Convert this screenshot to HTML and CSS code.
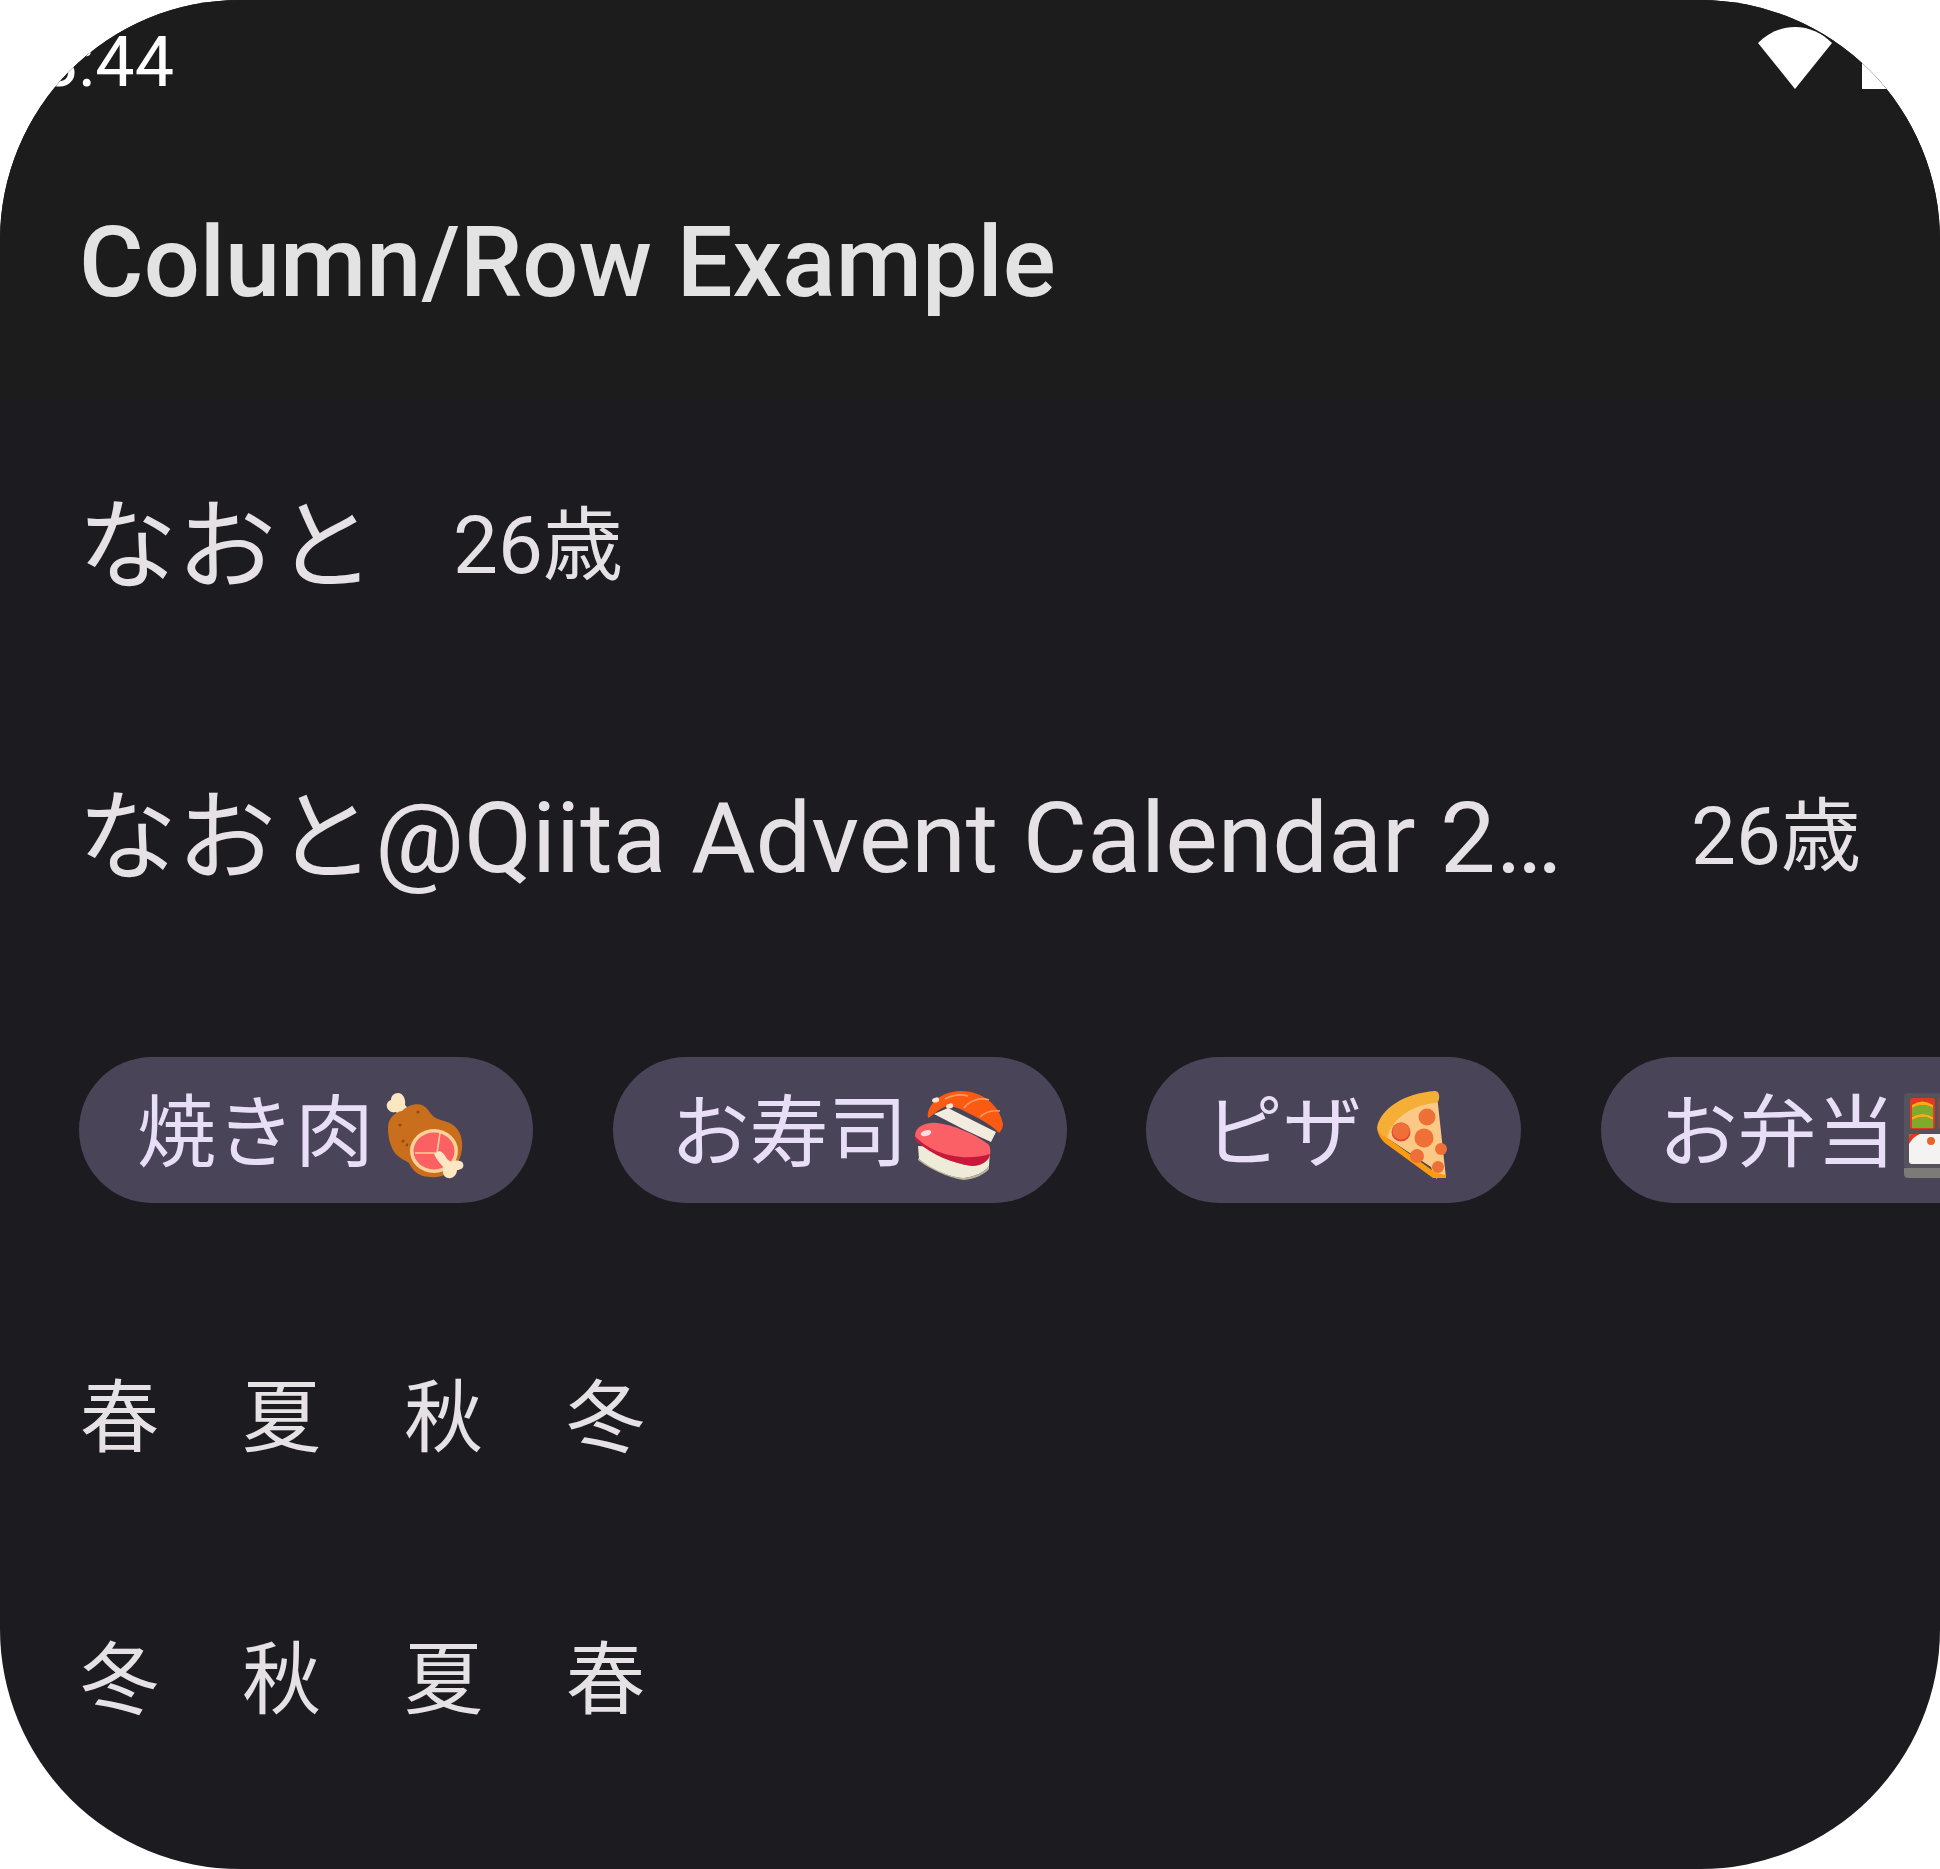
FILE: index.html
```html
<!DOCTYPE html>
<html lang="ja">
<head>
<meta charset="utf-8">
<title>Column/Row Example</title>
<link rel="stylesheet" href="styles.css">
</head>
<body>
<div class="frame">
  <header class="appbar">
    <div class="status">
      <span class="clock">8:44</span>
      <div class="status-icons">
        <svg class="wifi" viewBox="0 0 74 62"><path d="M0 16C10 6 23 0 37 0S64 6 74 16L37 62Z" fill="#fff"/></svg>
        <span class="battery"></span>
      </div>
    </div>
    <h1 class="title">Column/Row Example</h1>
  </header>
  <main class="content">
    <div class="row row-one">
      <span class="name">なおと</span>
      <span class="age age-near">26歳</span>
    </div>
    <div class="row row-two">
      <span class="name">なおと@Qiita Advent Calendar 2…</span>
      <span class="age age-far">26歳</span>
    </div>
    <div class="chips">
      <div class="chip">
        <span>焼き肉</span>
        <svg class="emoji" viewBox="0 0 101 100">
          <path d="M31 21l7 7-8 8-8-8c-4 1-8-1-9-5-1-3 1-6 4-7 0-4 3-7 7-7 5 0 8 6 7 12z" fill="#fbe7c2"/>
          <path d="M14 44c0-10 7-16 14-17 5-5 13-8 20-6 5 2 7 7 11 11 3 3 9 4 14 6 9 3 14 10 15 20 1 11-3 22-12 30-8 6-19 6-27 4-7-2-11-7-14-13-5-3-13-7-16-13-3-6-5-13-5-22z" fill="#c96e1c"/>
          <circle cx="26" cy="41" r="1.6" fill="#8f4d17"/><circle cx="44" cy="28" r="1.6" fill="#8f4d17"/><circle cx="29" cy="57" r="1.6" fill="#8f4d17"/><circle cx="33" cy="61" r="1.4" fill="#8f4d17"/>
          <ellipse cx="60" cy="67" rx="24" ry="22" fill="#fbd19b"/>
          <ellipse cx="60" cy="67" rx="20.5" ry="18.5" fill="#fb6162"/>
          <path d="M41 69h21M66 49l-3 20" stroke="#fbd19b" stroke-width="1.6" fill="none"/>
          <path d="M60 70l5-3c4 1 6 4 8 8l4 3c3-2 8-2 11 0 2 2 2 6-1 7-2 1-3 1-4 1 0 3-2 7-6 8-4 1-8-2-8-6 0-2 0-3 1-4-3-4-8-9-10-14z" fill="#fbe7c2"/>
        </svg>
      </div>
      <div class="chip">
        <span>お寿司</span>
        <svg class="emoji" viewBox="0 0 101 100">
          <path d="M26 30l14-6 48 24-5 10-28-13z" fill="#f1ecdd"/>
          <path d="M20 34c-2-12 12-27 33-27 22 0 39 15 42 33 0 4-2 7-4 9-6-7-17-13-31-20-9-5-15-7-20-7-8 1-14 9-20 12z" fill="#fb5a12"/>
          <path d="M37 15c8-4 16-5 23-3M56 24c5-7 16-11 25-8M72 33c5-5 12-7 20-6" stroke="#fb9a62" stroke-width="1.7" fill="none"/>
          <path d="M27 14c3-2 5 1 4 3-2 2-6 2-7 0 0-2 1-3 3-3zM41 20c3-2 5 1 4 3-2 2-6 2-7 0 0-2 1-3 3-3z" fill="#fde3d0"/>
          <path d="M10 62l1 13c10 9 30 19 45 19 10-1 21-6 25-12l1-16z" fill="#efebd9"/>
          <path d="M10 74c10 9 30 19 46 20 10-1 21-6 25-12v3c-5 6-15 10-25 11-16-2-36-12-46-20z" fill="#b9b69c"/>
          <path d="M7 52c0-9 10-14 22-13 16 2 36 10 51 21 3 3 3 9 1 14-5 6-11 8-17 8-20-3-40-11-54-24-2-2-3-4-3-6z" fill="#fb6067"/>
          <path d="M7 52c14 16 45 27 75 18-1 8-10 12-18 12-20-3-40-11-54-24-2-2-3-4-3-6z" fill="#c8183c"/>
          <path d="M13 49c3-3 8-4 10-2 1 2-2 5-5 5-3 1-6-1-5-3z" fill="#fde0e0"/>
        </svg>
      </div>
      <div class="chip">
        <span>ピザ</span>
        <svg class="emoji" viewBox="0 0 101 100">
          <path d="M19 50C16 30 45 12 75 11l9 83-5 0-3-5-1 6-3-3-3-9z" fill="#fbc985"/>
          <path d="M15 44C18 25 42 9 73 7c3 0 5 3 4 8 0 2-2 4-4 4-22 2-42 14-48 35-3 1-8-3-10-10z" fill="#f5af36"/>
          <path d="M15 44c1 7 4 11 8 15l48 35 13 0 0-3-10-2L24 53c-3-1-7-4-9-9z" fill="#fb9c10"/>
          <circle cx="65" cy="33" r="8.5" fill="#ee7036"/><circle cx="39" cy="48" r="9.5" fill="#e5483a"/><circle cx="39" cy="47" r="8.5" fill="#ee7036"/>
          <circle cx="62" cy="54" r="9.5" fill="#ee7036"/><circle cx="79" cy="65" r="6" fill="#ee7036"/><circle cx="55" cy="72" r="7" fill="#ee7036"/><circle cx="76" cy="83" r="6" fill="#ee7036"/>
        </svg>
      </div>
      <div class="chip">
        <span>お弁当</span>
        <svg class="emoji" viewBox="0 0 101 100">
          <rect x="8" y="9" width="93" height="75" rx="3" fill="#55525c"/>
          <path d="M8 84h93v10H12q-4 0-4-4z" fill="#7d7b78"/>
          <rect x="14" y="14" width="25" height="31" rx="3" fill="#e23a1f"/>
          <path d="M16 21q10-7 21 0v3q-10-6-21 0zM16 33q10-7 21 0v3q-10-6-21 0z" fill="#f7ae15"/>
          <path d="M16 24q10-6 21 0v9q-10-6-21 0zM16 36q10-6 21 0v8H16z" fill="#7fab2c"/>
          <rect x="42" y="14" width="59" height="31" rx="2" fill="#8a4a3f"/>
          <rect x="13" y="50" width="88" height="30" rx="3" fill="#f4f3f2"/>
          <path d="M13 60v-7q0-3 3-3h8q-6 2-11 10z" fill="#e23a1f"/>
          <circle cx="35" cy="57" r="4" fill="#e76424"/>
        </svg>
      </div>
    </div>
    <div class="seasons seasons-first">
      <span>春</span><span>夏</span><span>秋</span><span>冬</span>
    </div>
    <div class="seasons seasons-second">
      <span>冬</span><span>秋</span><span>夏</span><span>春</span>
    </div>
  </main>
</div>
</body>
</html>
```
FILE: styles.css
```css
html, body {
  margin: 0;
  padding: 0;
  background: #fff;
}
.frame {
  width: 1940px;
  height: 1869px;
  border-radius: 240px;
  overflow: hidden;
  background: #1c1b1f;
  display: flex;
  flex-direction: column;
  font-family: Roboto, "Noto Sans CJK JP", sans-serif;
  color: #e6e1e5;
}
.appbar {
  height: 398px;
  background: #1c1c1c;
  display: flex;
  flex-direction: column;
  flex: none;
}
.status {
  height: 122px;
  display: flex;
  justify-content: space-between;
  color: #fff;
}
.clock {
  font-size: 70px;
  line-height: 124px;
  margin-left: 39px;
}
.status-icons {
  display: flex;
  align-items: flex-start;
}
.wifi {
  width: 74px;
  height: 62px;
  margin-top: 27px;
  margin-right: 30px;
}
.battery {
  width: 78px;
  height: 89px;
  background: #fff;
}
.title {
  margin: 70px 0 0 79px;
  font-size: 99px;
  font-weight: 500;
  line-height: 140px;
  color: #e3e3e3;
}
.content {
  display: flex;
  flex-direction: column;
  padding: 0 80px;
  flex: 1;
  min-height: 0;
}
.row {
  display: flex;
  align-items: center;
  height: 160px;
  white-space: nowrap;
}
.row-one { margin-top: 60px; }
.row-two { margin-top: 131px; }
.name { font-size: 99px; margin-left: -2px; }
.age { font-size: 80px; }
.age-near { margin-left: 78px; }
.age-far { margin-left: auto; margin-right: -1px; }
.chips {
  display: flex;
  gap: 79.5px;
  margin: 148px -80px 0 -1px;
  overflow: hidden;
}
.chip {
  flex: none;
  height: 146px;
  border-radius: 73px;
  background: #4a4458;
  color: #e8def8;
  font-size: 79px;
  display: flex;
  align-items: center;
  padding: 0 58px;
}
.chip span {
  margin-bottom: 8px;
}
.emoji {
  width: 101px;
  height: 100px;
  flex: none;
  margin-top: 8px;
}
.seasons {
  display: flex;
  gap: 83px;
  font-size: 79px;
  line-height: 100px;
}
.seasons-first { margin-top: 166px; }
.seasons-second { margin-top: 162px; }
```
